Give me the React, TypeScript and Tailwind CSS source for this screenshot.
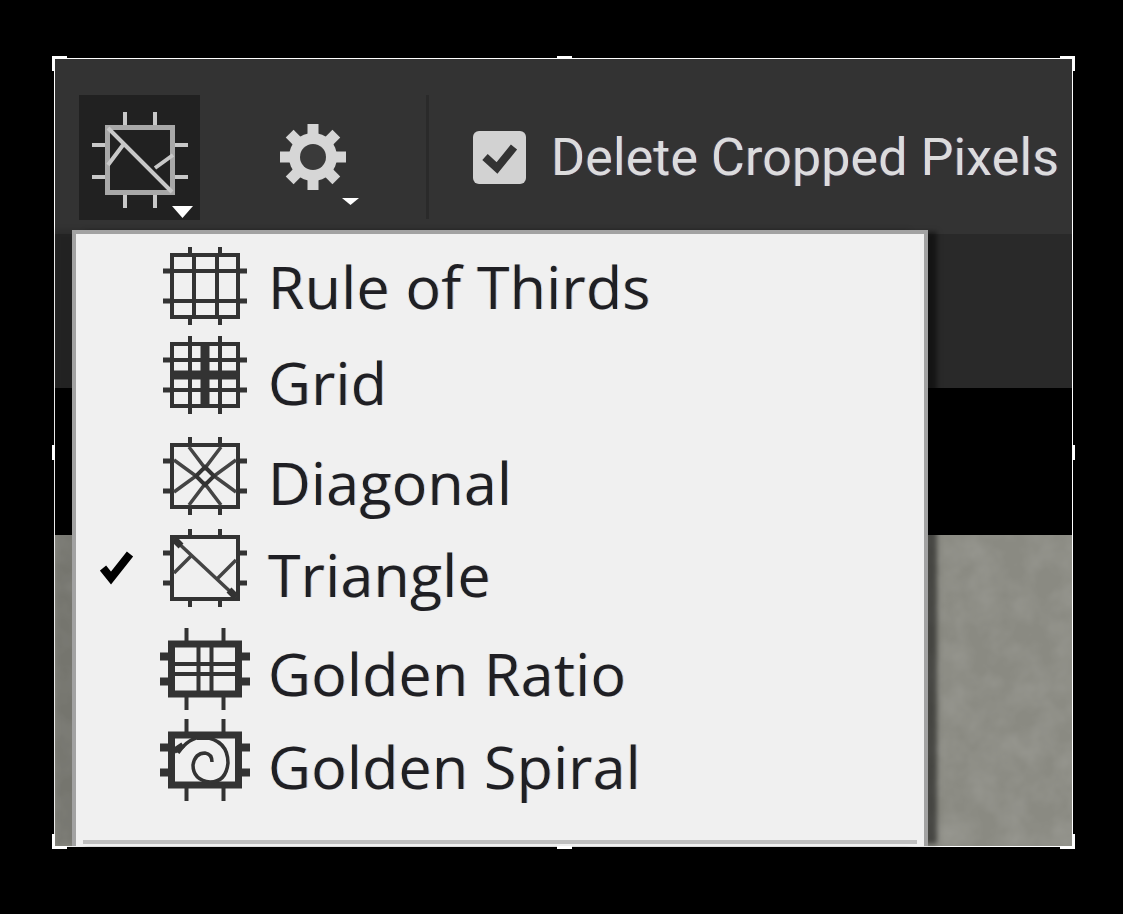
import React from 'react';

const labelFont =
  "font-['Open_Sans','Noto_Sans',sans-serif] text-[59px] leading-none tracking-[0.3px] text-[#1f1f24] [text-shadow:-1px_0_rgba(255,170,60,0.35),1px_0_rgba(60,150,255,0.35)]";

function Tick({ sw = 4, x = 15, y = 15, w = 33, h = 31, ox = 42, oy = 39 }: { sw?: number; x?: number; y?: number; w?: number; h?: number; ox?: number; oy?: number }) {
  return (
    <>
      <rect x={-w} y={-h} width={w * 2} height={h * 2} fill="none" strokeWidth={sw} />
      <path d={`M${-x} ${-oy}V${-h}M${x} ${-oy}V${-h}M${-x} ${oy}V${h}M${x} ${oy}V${h}`} strokeWidth={4} />
      <path d={`M${-ox} ${-y}H${-w}M${-ox} ${y}H${-w}M${ox} ${-y}H${w}M${ox} ${y}H${w}`} strokeWidth={sw === 4 ? 5 : 8} />
    </>
  );
}

function MenuIcon({ children }: { children: React.ReactNode }) {
  return (
    <svg width="92" height="92" viewBox="-46 -46 92 92" className="shrink-0 overflow-visible" stroke="#333" fill="none">
      {children}
    </svg>
  );
}

const RuleIcon = () => (
  <MenuIcon>
    <Tick />
    <path d="M-11 -31V31M12 -31V31M-33 -15H33M-33 15H33" strokeWidth="4" />
  </MenuIcon>
);

const GridIcon = () => (
  <MenuIcon>
    <Tick />
    <path d="M-15 -31V31M15 -31V31M-33 -15H33M-33 15H33" strokeWidth="4" />
    <path d="M0 -31V31M-33 0H33" strokeWidth="9" />
  </MenuIcon>
);

const DiagonalIcon = () => (
  <MenuIcon>
    <Tick />
    <path d="M-31 -16L-9 0L-31 16M31 -16L9 0L31 16M-16 -29L0 -8L16 -29M-16 29L0 8L16 29" strokeWidth="3.5" stroke="#444" />
    <path d="M0 -9L9 0L0 9L-9 0Z" strokeWidth="4" />
  </MenuIcon>
);

const TriangleIcon = () => (
  <MenuIcon>
    <Tick />
    <path d="M-31 -29L31 29" strokeWidth="3.5" stroke="#444" />
    <path d="M-31 -29L-24 -22M24 22L31 29" strokeWidth="7" />
    <path d="M-31 5L-13 -13M12 11L31 -8" strokeWidth="3.5" stroke="#444" />
  </MenuIcon>
);

const RatioIcon = () => (
  <MenuIcon>
    <Tick sw={7} x={18.5} y={12.5} w={33.5} h={25} ox={45} oy={41} />
    <path d="M-6.5 -25V25M6.5 -25V25M-33 -5H33M-33 5H33" strokeWidth="4" />
  </MenuIcon>
);

const SpiralIcon = () => (
  <MenuIcon>
    <Tick sw={7} x={18.5} y={12.5} w={33.5} h={25} ox={45} oy={41} />
    <path d="M-27 -7Q-16 -23 -2 -23Q23 -20 23 3Q21 22 5 22Q-12 20 -12 5Q-10 -7 0 -7Q7 -6 7 2" strokeWidth="3.5" />
    <path d="M-31 -9L-22 -15M-8 -23H8" strokeWidth="6" />
  </MenuIcon>
);

const menuItems = [
  { label: 'Rule of Thirds', icon: RuleIcon, rowClass: 'h-[92px]', labelClass: 'pt-[0px]' },
  { label: 'Grid', icon: GridIcon, rowClass: 'h-[86px]', labelClass: 'pt-[14px]' },
  { label: 'Diagonal', icon: DiagonalIcon, rowClass: 'h-[116px]', labelClass: 'pt-[12px]' },
  { label: 'Triangle', icon: TriangleIcon, rowClass: 'h-[68px]', labelClass: 'pt-[12px]', checked: true },
  { label: 'Golden Ratio', icon: RatioIcon, rowClass: 'h-[133px]', labelClass: 'pt-[10px]' },
  { label: 'Golden Spiral', icon: SpiralIcon, rowClass: 'h-[50px]', labelClass: 'pt-[12px]' },
];

function Gear() {
  const teeth = [0, 45, 90, 135, 180, 225, 270, 315];
  return (
    <svg width="100" height="92" viewBox="-38 -46 100 92" className="shrink-0 overflow-visible">
      <circle r="24" fill="#d6d6d6" />
      {teeth.map((a) => (
        <rect key={a} x="-5.5" y="-33" width="11" height="14" fill="#d6d6d6" transform={`rotate(${a})`} />
      ))}
      <circle r="13" fill="#3a3a3a" />
      <path d="M29 41H46L37.5 48Z" fill="#fff" />
    </svg>
  );
}

function ToolbarTriangleIcon() {
  return (
    <svg width="121" height="125" viewBox="-61 -65 121 125" stroke="#c8c8c8" fill="none">
      <rect x="-32.5" y="-32.5" width="65" height="65" strokeWidth="5" stroke="#a8a8a8" />
      <path d="M-15 -48V-35M15 -48V-35M-15 48V35M15 48V35M-48 -15H-35M-48 17H-35M48 -15H35M48 17H35" strokeWidth="4" />
      <path d="M-32 -32L32 32M-32 5L-17 -15M15 8L33 -5" strokeWidth="4" />
      <path d="M32 46H53L42.5 58Z" fill="#fff" stroke="none" />
    </svg>
  );
}

function Handle({ className }: { className: string }) {
  return <div className={`absolute bg-white ${className}`} />;
}

export default function App() {
  return (
    <div className="h-[914px] w-[1123px] overflow-hidden bg-black pl-[54px] pt-[58px]">
      <div className="relative flex h-[789px] w-[1019px] flex-col border border-white blur-[0.5px]">
        <div className="flex h-[175px] shrink-0 items-start bg-[#333333] pl-[24px] pt-[36px]">
          <div className="h-[125px] w-[121px] shrink-0 bg-[#212121]">
            <ToolbarTriangleIcon />
          </div>
          <div className="ml-[75px] mt-[16px]">
            <Gear />
          </div>
          <div className="ml-[51px] h-[124px] w-[3px] shrink-0 bg-[#2a2a2a]" />
          <div className="ml-[44px] mt-[36px] flex h-[53px] w-[53px] shrink-0 items-center justify-center rounded-[6px] bg-[#d2d2d2]">
            <svg width="38" height="34" viewBox="0 0 38 34" fill="none">
              <path d="M4 16L16 27L33 6" stroke="#333" strokeWidth="8" />
            </svg>
          </div>
          <span className="ml-[25px] mt-[33px] whitespace-nowrap font-['Roboto','Open_Sans',sans-serif] text-[52px] leading-[60px] tracking-[0.1px] text-[#dcdcdc] [text-shadow:-1px_0_rgba(60,110,200,0.5),1px_0_rgba(160,60,60,0.4)]">
            Delete Cropped Pixels
          </span>
        </div>
        <div className="h-[154px] shrink-0 bg-[#292929]" />
        <div className="h-[147px] shrink-0 bg-black" />
        <div className="min-h-0 flex-1 bg-[#8a8a82]">
          <svg className="block h-full w-full" preserveAspectRatio="none">
            <filter id="stone">
              <feTurbulence type="fractalNoise" baseFrequency="0.035" numOctaves="3" seed="4" />
              <feColorMatrix values="0 0 0 0 0.35  0 0 0 0 0.35  0 0 0 0 0.32  0.9 0 0 0 -0.28" />
            </filter>
            <rect width="100%" height="100%" filter="url(#stone)" />
          </svg>
        </div>

        <div className="absolute bottom-0 left-[17px] top-[171px] flex w-[856px] flex-col border-x-4 border-t-4 border-[#a2a2a2] bg-[#f0f0f0] pt-[6px] shadow-[11px_0_5px_-2px_rgba(0,0,0,0.5),-18px_0_6px_rgba(0,0,0,0.15)]">
          {menuItems.map((item) => (
            <div key={item.label} className={`flex shrink-0 items-center ${item.rowClass}`}>
              <div className="flex w-[83px] shrink-0 justify-start pl-[24px]">
                {item.checked && (
                  <svg width="34" height="34" viewBox="0 0 34 34" fill="none">
                    <path d="M3 17L11 27L30 3" stroke="#000" strokeWidth="8" />
                  </svg>
                )}
              </div>
              <item.icon />
              <span className={`ml-[17px] whitespace-nowrap ${labelFont} ${item.labelClass}`}>{item.label}</span>
            </div>
          ))}
          <div className="mx-[7px] mb-[2px] mt-auto h-[4px] shrink-0 bg-[#bfbfbf]" />
        </div>

        <Handle className="left-[-3px] top-[-3px] h-[3px] w-[15px]" />
        <Handle className="left-[-3px] top-[-3px] h-[15px] w-[3px]" />
        <Handle className="right-[-3px] top-[-3px] h-[3px] w-[15px]" />
        <Handle className="right-[-3px] top-[-3px] h-[15px] w-[3px]" />
        <Handle className="bottom-[-3px] left-[-3px] h-[3px] w-[15px]" />
        <Handle className="bottom-[-3px] left-[-3px] h-[15px] w-[3px]" />
        <Handle className="bottom-[-3px] right-[-3px] h-[3px] w-[15px]" />
        <Handle className="bottom-[-3px] right-[-3px] h-[15px] w-[3px]" />
        <Handle className="left-[502px] top-[-3px] h-[3px] w-[15px]" />
        <Handle className="bottom-[-3px] left-[502px] h-[3px] w-[15px]" />
        <Handle className="left-[-3px] top-[386px] h-[15px] w-[3px]" />
        <Handle className="right-[-3px] top-[386px] h-[15px] w-[3px]" />
      </div>
    </div>
  );
}
